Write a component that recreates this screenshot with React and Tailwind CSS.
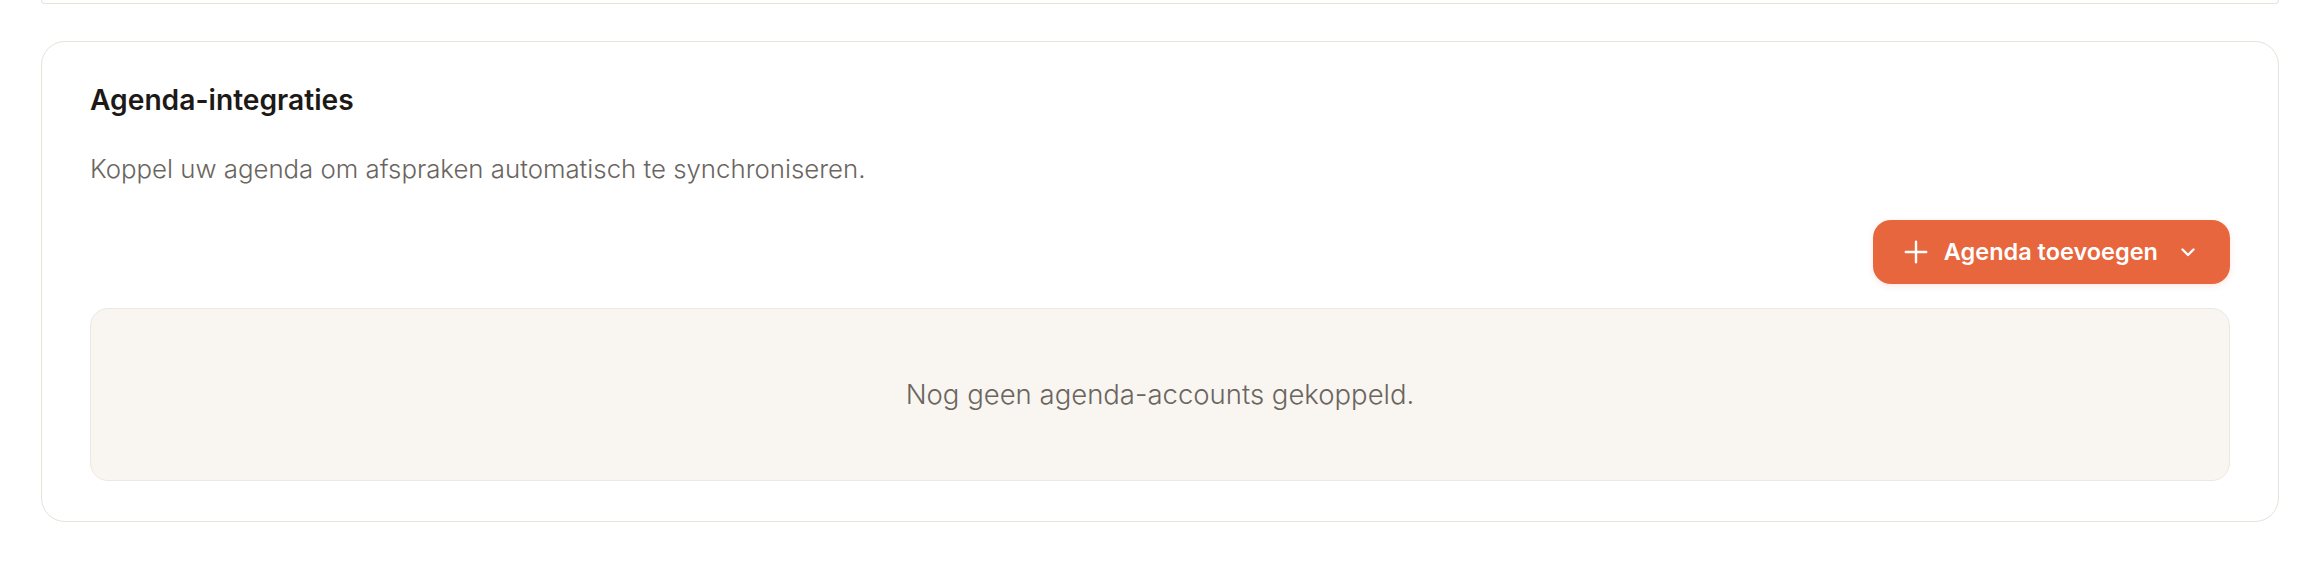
import React from "react";

function PlusIcon() {
  return (
    <svg width="24" height="24" viewBox="0 0 24 24" fill="none" stroke="currentColor" strokeWidth="2.4" strokeLinecap="round">
      <path d="M12 1.8v20.4M1.8 12h20.4" />
    </svg>
  );
}

function ChevronDown() {
  return (
    <svg width="24" height="24" viewBox="0 0 24 24" fill="none" stroke="currentColor" strokeWidth="2.4" strokeLinecap="round" strokeLinejoin="round">
      <path d="M6.5 9.5l5.5 5.5 5.5-5.5" />
    </svg>
  );
}

export default function App() {
  return (
    <div className="min-h-[564px] w-full bg-white" style={{ fontFamily: "Inter, 'Noto Sans', sans-serif" }}>
      <div className="mx-[41px] h-[4px] rounded-b-[24px] border-x border-b border-[#e8e2da]" />
      <div className="mx-[41px] mt-[37px] rounded-[24px] border-[1.5px] border-[#e8e2da] bg-white px-[48px] pt-[40px] pb-[40px]">
        <h2 className="text-[28.2px] leading-[36px] font-semibold text-[#1c1917]">Agenda-integraties</h2>
        <p className="mt-[33px] text-[25.8px] leading-[36px] font-light text-[#6b6560]">
          Koppel uw agenda om afspraken automatisch te synchroniseren.
        </p>
        <div className="mt-[33px] flex justify-end">
          <button className="flex h-[64px] items-center rounded-[18px] bg-[#e8663d] pl-[31px] pr-[30px] text-[23.5px] font-semibold text-white shadow-[0_2px_6px_rgba(232,102,61,0.15)]">
            <PlusIcon />
            <span className="ml-[16px]">Agenda toevoegen</span>
            <span className="ml-[18px]"><ChevronDown /></span>
          </button>
        </div>
        <div className="mt-[24px] flex h-[173px] items-center justify-center rounded-[18px] border-[1.5px] border-[#ede8e1] bg-[#f9f6f2]">
          <span className="text-[27.5px] font-light text-[#6b6560]">Nog geen agenda-accounts gekoppeld.</span>
        </div>
      </div>
    </div>
  );
}
